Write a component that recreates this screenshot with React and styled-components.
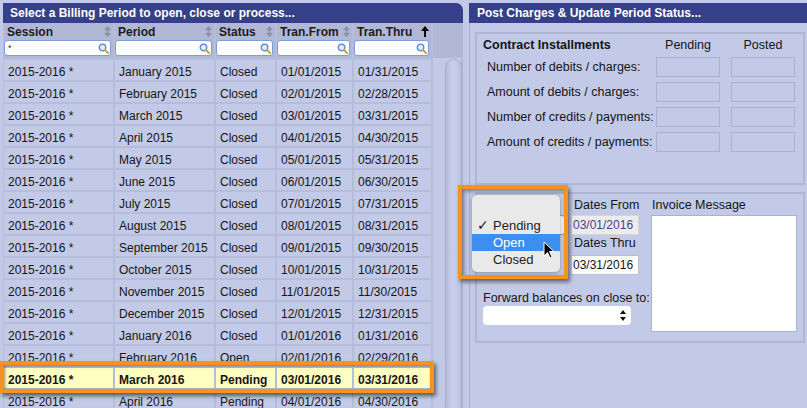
import React from "react";
import styled, { createGlobalStyle } from "styled-components";

const GlobalStyle = createGlobalStyle`
  html, body {
    margin: 0;
    padding: 0;
    background: #c2cae8;
    font-family: "Liberation Sans", Arial, sans-serif;
    font-size: 12px;
    color: #151515;
  }
  * { box-sizing: border-box; }
`;

const Page = styled.div`
  display: flex;
  height: 408px;
  padding: 3px 0 0 3px;
  overflow: hidden;
  background: #c2cae8;
`;

const LeftPanel = styled.div`
  position: relative;
  flex: 0 0 460px;
  display: flex;
  flex-direction: column;
`;

const TitleBar = styled.div`
  height: 20px;
  line-height: 21px;
  background: #363f8a;
  color: #ffffff;
  font-weight: bold;
  font-size: 12px;
  padding-left: ${(p) => p.$pad}px;
  border-top-right-radius: ${(p) => (p.$round ? "7px" : "0")};
  white-space: nowrap;
`;

const TableArea = styled.div`
  flex: 1;
  display: flex;
  overflow: hidden;
`;

const Grid = styled.div`
  display: grid;
  grid-template-columns: 109px 99px 59px 75px 77px;
  grid-template-rows: 35px;
  grid-auto-rows: 20px;
  gap: 2px;
  align-content: start;
  padding: 0 2px 0 1px;
  background: #b5bdda;
`;

const HeadCell = styled.div`
  background: #b0b8d6;
  padding-top: 1px;
`;

const HeadLabel = styled.div`
  display: flex;
  justify-content: space-between;
  align-items: center;
  height: 15px;
  padding: 0 2px 0 3px;
  font-weight: bold;
  font-size: 12px;
  color: #1c1c1c;
`;

const FilterBox = styled.div`
  height: 16px;
  margin: 1px 2px 0 0;
  background: #ffffff;
  border: 1px solid #7b9fdc;
  border-radius: 3px;
  display: flex;
  align-items: center;
  justify-content: space-between;
  padding: 0 1px 0 3px;
  font-size: 9px;
  color: #333;
`;

const Cell = styled.div`
  background: ${(p) => (p.$hi ? "#ffffc2" : "#c2cae8")};
  font-weight: ${(p) => (p.$hi ? "bold" : "normal")};
  padding: 2px 0 0 4px;
  line-height: 20px;
  font-size: 12px;
  white-space: nowrap;
  overflow: hidden;
`;

const ScrollCol = styled.div`
  width: 30px;
  display: flex;
  flex-direction: column;
`;

const ScrollHead = styled.div`
  height: 35px;
  background: #b0b8d6;
  margin-bottom: 1px;
`;

const ScrollBody = styled.div`
  flex: 1;
  padding-left: 12px;
  border-right: 2px solid #aab2d0;
`;

const Track = styled.div`
  width: 17px;
  height: 100%;
  border: 1px solid #a7afcd;
  border-bottom: none;
  border-radius: 9px 9px 0 0;
  background: linear-gradient(90deg, #b3bbd8 0%, #c6cdea 35%, #c6cdea 65%, #b8c0dc 100%);
`;

const Callout = styled.div`
  position: absolute;
  left: -3px;
  top: 358px;
  width: 434px;
  height: 32px;
  border: 4px solid #f7921e;
  box-shadow: 2px 3px 4px rgba(0, 0, 0, 0.55), inset 1px 1px 3px rgba(0, 0, 0, 0.45);
  pointer-events: none;
`;

const Divider = styled.div`
  flex: 0 0 6px;
`;

const RightPanel = styled.div`
  position: relative;
  flex: 1;
  min-width: 0;
  display: flex;
  flex-direction: column;
  font-size: 12.5px;
`;

const RightBody = styled.div`
  flex: 1;
  border-left: 1px solid #a9b1d0;
  padding: 9px 2px 0 5px;
`;

const Fieldset = styled.div`
  height: ${(p) => p.$h}px;
  border: 2px solid #afb7d5;
  margin-bottom: 7px;
  padding: ${(p) => p.$pad};
`;

const InstallGrid = styled.div`
  display: grid;
  grid-template-columns: 162px 64px 64px;
  grid-template-rows: 13px;
  grid-auto-rows: 20px;
  column-gap: 11px;
  row-gap: 5px;
  align-items: center;
`;

const GroupTitle = styled.div`
  font-weight: bold;
  line-height: 13px;
  white-space: nowrap;
`;

const ColTitle = styled.div`
  text-align: center;
  line-height: 13px;
`;

const RowLabel = styled.div`
  padding-left: 4px;
  white-space: nowrap;
`;

const ValueBox = styled.div`
  height: 20px;
  border: 1px solid #a9b1d0;
`;

const StatusRow = styled.div`
  display: flex;
`;

const LeftBlock = styled.div`
  display: grid;
  grid-template-columns: 83px 68px;
  grid-template-rows: 17px 20px 20px 20px 31px 19px;
  column-gap: 5px;
`;

const FieldLabel = styled.div`
  line-height: 14px;
  padding-left: ${(p) => (p.$flush ? 0 : 3)}px;
  align-self: ${(p) => p.$align || "start"};
  padding-top: ${(p) => p.$pt || 0}px;
  padding-bottom: ${(p) => p.$pb || 0}px;
  white-space: nowrap;
  grid-column: ${(p) => p.$col || "auto"};
`;

const DateInput = styled.div`
  grid-column: 2;
  border: 1px solid ${(p) => (p.$disabled ? "#d4d4d4" : "#b9bfd6")};
  background: ${(p) => (p.$disabled ? "#ececec" : "#ffffff")};
  color: ${(p) => (p.$disabled ? "#4a3e8c" : "#151515")};
  line-height: 18px;
  padding-left: 1px;
  font-size: 12px;
`;

const StatusSelect = styled.div`
  grid-column: 1;
  border: 1px solid #7f9ad0;
  border-radius: 4px;
  background: #f4f4f4;
`;

const ForwardSelect = styled.div`
  grid-column: 1 / span 2;
  width: 148px;
  background: #ffffff;
  border-radius: 4px;
  display: flex;
  justify-content: flex-end;
  align-items: center;
  padding-right: 5px;
`;

const InvoiceBlock = styled.div`
  margin-left: 12px;
  display: flex;
  flex-direction: column;
`;

const InvoiceLabel = styled.div`
  line-height: 14px;
  padding-left: 1px;
  margin-bottom: 3px;
`;

const TextArea = styled.div`
  width: 146px;
  height: 117px;
  background: #ffffff;
  border: 1px solid #a9b1d0;
`;

const PopupFrame = styled.div`
  position: absolute;
  left: -11px;
  top: 182px;
  width: 110px;
  height: 94px;
  border: 4px solid #f7921e;
  box-shadow: 2px 3px 4px rgba(0, 0, 0, 0.5), inset 2px 2px 4px rgba(0, 0, 0, 0.4);
`;

const Menu = styled.div`
  position: absolute;
  left: 3px;
  top: 192px;
  width: 88px;
  height: 77px;
  padding-top: 22px;
  background: #e9e9ea;
  border-radius: 5px;
  box-shadow: 0 1px 4px rgba(0, 0, 0, 0.3);
`;

const MenuItem = styled.div`
  display: flex;
  height: 17px;
  line-height: 17px;
  padding-left: 5px;
  font-size: 13px;
  background: ${(p) => (p.$active ? "#3d8ef0" : "transparent")};
  color: ${(p) => (p.$active ? "#ffffff" : "#1d1d1d")};
`;

const Check = styled.span`
  width: 16px;
  font-family: "DejaVu Sans", sans-serif;
  font-size: 14px;
  font-weight: bold;
`;

const Cursor = styled.svg`
  position: absolute;
  left: 74px;
  top: 238px;
`;

const SortBoth = () => (
  <svg width="7" height="11" viewBox="0 0 7 11">
    <path d="M3.5 0 L7 4 H0 Z M0 7 H7 L3.5 11 Z" fill="#8b92a8" />
    <rect x="2.5" y="3" width="2" height="5" fill="#8b92a8" />
  </svg>
);

const SortUp = () => (
  <svg width="8" height="11" viewBox="0 0 8 11">
    <path d="M4 0 L8 5 H5 V11 H3 V5 H0 Z" fill="#000" />
  </svg>
);

const Magnifier = () => (
  <svg width="11" height="11" viewBox="0 0 11 11">
    <circle cx="4.5" cy="4.5" r="3.3" fill="#dfeafa" stroke="#5a85cc" strokeWidth="1.3" />
    <line x1="7" y1="7" x2="10" y2="10" stroke="#c9a23c" strokeWidth="2" strokeLinecap="round" />
  </svg>
);

const UpDown = () => (
  <svg width="6" height="11" viewBox="0 0 6 11">
    <path d="M3 0 L6 4 H0 Z M0 7 H6 L3 11 Z" fill="#111" />
  </svg>
);

const columns = [
  { name: "Session", sort: "both", value: "*" },
  { name: "Period", sort: "both" },
  { name: "Status", sort: "both" },
  { name: "Tran.From", sort: "both" },
  { name: "Tran.Thru", sort: "up" },
];

const months = [
  ["January", "01", 31],
  ["February", "02", 28],
  ["March", "03", 31],
  ["April", "04", 30],
  ["May", "05", 31],
  ["June", "06", 30],
  ["July", "07", 31],
  ["August", "08", 31],
  ["September", "09", 30],
  ["October", "10", 31],
  ["November", "11", 30],
  ["December", "12", 31],
];

const rows = [];
months.forEach(([m, n, d]) =>
  rows.push({ period: `${m} 2015`, status: "Closed", from: `${n}/01/2015`, thru: `${n}/${d}/2015` })
);
rows.push({ period: "January 2016", status: "Closed", from: "01/01/2016", thru: "01/31/2016" });
rows.push({ period: "February 2016", status: "Open", from: "02/01/2016", thru: "02/29/2016" });
rows.push({ period: "March 2016", status: "Pending", from: "03/01/2016", thru: "03/31/2016", hi: true });
rows.push({ period: "April 2016", status: "Pending", from: "04/01/2016", thru: "04/30/2016" });

const installRows = [
  "Number of debits / charges:",
  "Amount of debits / charges:",
  "Number of credits / payments:",
  "Amount of credits / payments:",
];

export default function App() {
  return (
    <>
      <GlobalStyle />
      <Page>
        <LeftPanel>
          <TitleBar $pad={7} $round>
            Select a Billing Period to open, close or process...
          </TitleBar>
          <TableArea>
            <Grid>
              {columns.map((c) => (
                <HeadCell key={c.name}>
                  <HeadLabel>
                    {c.name}
                    {c.sort === "up" ? <SortUp /> : <SortBoth />}
                  </HeadLabel>
                  <FilterBox>
                    <span>{c.value || ""}</span>
                    <Magnifier />
                  </FilterBox>
                </HeadCell>
              ))}
              {rows.map((r) => (
                <React.Fragment key={r.period}>
                  <Cell $hi={r.hi}>2015-2016 *</Cell>
                  <Cell $hi={r.hi}>{r.period}</Cell>
                  <Cell $hi={r.hi}>{r.status}</Cell>
                  <Cell $hi={r.hi}>{r.from}</Cell>
                  <Cell $hi={r.hi}>{r.thru}</Cell>
                </React.Fragment>
              ))}
            </Grid>
            <ScrollCol>
              <ScrollHead />
              <ScrollBody>
                <Track />
              </ScrollBody>
            </ScrollCol>
          </TableArea>
          <Callout />
        </LeftPanel>
        <Divider />
        <RightPanel>
          <TitleBar $pad={8}>Post Charges &amp; Update Period Status...</TitleBar>
          <RightBody>
            <Fieldset $h={153} $pad="5px 0 0 6px">
              <InstallGrid>
                <GroupTitle>Contract Installments</GroupTitle>
                <ColTitle>Pending</ColTitle>
                <ColTitle>Posted</ColTitle>
                {installRows.map((l) => (
                  <React.Fragment key={l}>
                    <RowLabel>{l}</RowLabel>
                    <ValueBox />
                    <ValueBox />
                  </React.Fragment>
                ))}
              </InstallGrid>
            </Fieldset>
            <Fieldset $h={151} $pad="4px 0 0 6px">
              <StatusRow>
                <LeftBlock>
                  <FieldLabel>Status</FieldLabel>
                  <FieldLabel>Dates From</FieldLabel>
                  <StatusSelect />
                  <DateInput $disabled>03/01/2016</DateInput>
                  <FieldLabel $col={2} $pt={1}>
                    Dates Thru
                  </FieldLabel>
                  <DateInput>03/31/2016</DateInput>
                  <FieldLabel $col="1 / span 2" $align="end" $pb={1} $flush>
                    Forward balances on close to:
                  </FieldLabel>
                  <ForwardSelect>
                    <UpDown />
                  </ForwardSelect>
                </LeftBlock>
                <InvoiceBlock>
                  <InvoiceLabel>Invoice Message</InvoiceLabel>
                  <TextArea />
                </InvoiceBlock>
              </StatusRow>
            </Fieldset>
          </RightBody>
          <PopupFrame />
          <Menu>
            <MenuItem>
              <Check>✓</Check>Pending
            </MenuItem>
            <MenuItem $active>
              <Check />
              Open
            </MenuItem>
            <MenuItem>
              <Check />
              Closed
            </MenuItem>
          </Menu>
          <Cursor width="12" height="18" viewBox="0 0 12 18">
            <path
              d="M1 1 L1 15 L4.5 11.5 L7 17 L9 16 L6.5 10.5 L11 10.5 Z"
              fill="#000"
              stroke="#fff"
              strokeWidth="1"
              strokeLinejoin="round"
            />
          </Cursor>
        </RightPanel>
      </Page>
    </>
  );
}
